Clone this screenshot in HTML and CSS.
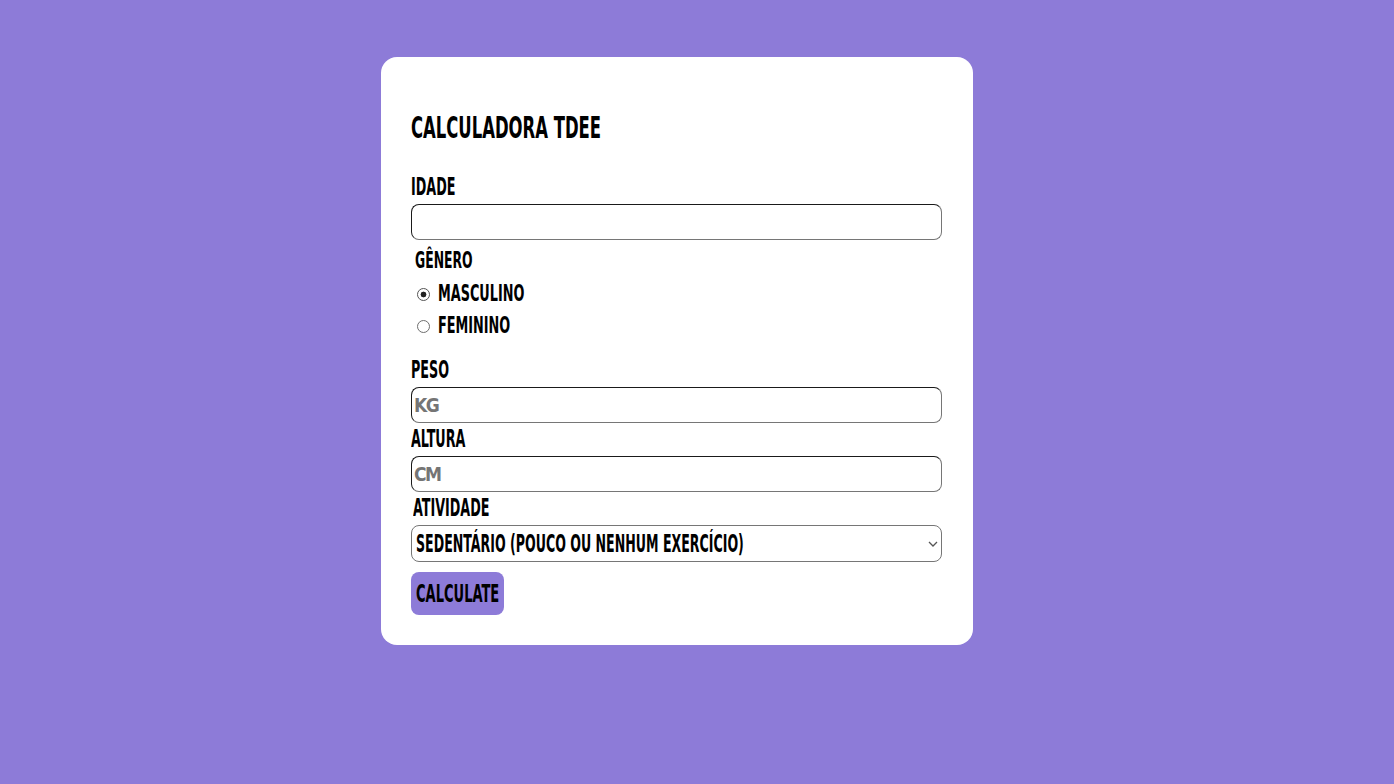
FILE: index.html
```html
<!DOCTYPE html>
<html lang="pt">
<head>
<meta charset="utf-8">
<title>Calculadora TDEE</title>
<link rel="stylesheet" href="styles.css">
</head>
<body>
<div class="page">
  <form class="card">
    <h1 class="title"><span class="t">Calculadora TDEE</span></h1>
    <label class="label" for="idade"><span class="t">Idade</span></label>
    <input class="field" id="idade" type="text">
    <div class="gender">
      <div class="legend"><span class="t">Gênero</span></div>
      <label class="radio-row"><input class="radio" type="radio" name="g" checked><span class="t">Masculino</span></label>
      <label class="radio-row"><input class="radio" type="radio" name="g"><span class="t">Feminino</span></label>
    </div>
    <label class="label label-peso" for="peso"><span class="t">Peso</span></label>
    <input class="field" id="peso" type="text" placeholder="kg">
    <label class="label label-tight" for="altura"><span class="t">Altura</span></label>
    <input class="field" id="altura" type="text" placeholder="cm">
    <label class="label label-tight label-indent" for="atividade"><span class="t">Atividade</span></label>
    <div class="select" id="atividade" role="combobox" aria-expanded="false" tabindex="0">
      <span class="t select-text">Sedentário (pouco ou nenhum exercício)</span>
      <svg class="chevron" width="10" height="6" viewBox="0 0 10 6" aria-hidden="true"><path d="M1 1l4 4 4-4" fill="none" stroke="#555" stroke-width="1.3"/></svg>
    </div>
    <div class="actions"><button class="button" type="button"><span class="t">Calculate</span></button></div>
  </form>
</div>
</body>
</html>
```
FILE: styles.css
```css
html, body {
  margin: 0;
  padding: 0;
}
body {
  background: #8d7bd8;
  font-family: "DejaVu Sans Condensed", "DejaVu Sans", sans-serif;
  font-weight: 700;
  text-transform: uppercase;
  color: #000;
  min-height: 784px;
}
.t {
  display: inline-block;
  white-space: nowrap;
  transform: scaleX(0.59);
  transform-origin: 0 50%;
}
.page {
  display: flex;
  justify-content: center;
  padding: 57px 40px 0 0;
}
.card {
  width: 531px;
  background: #fff;
  border-radius: 16px;
  padding: 30px 31px 30px 30px;
  display: flex;
  flex-direction: column;
}
.title {
  margin: 22px 0 0;
  font-size: 31px;
  line-height: 36px;
  font-weight: 700;
}
.label {
  display: block;
  font-size: 24px;
  line-height: 28px;
  margin: 28px 0 3px;
}
.label-peso { margin-top: 15px; margin-bottom: 3px; }
.label-tight { margin-top: 2px; margin-bottom: 3px; }
.label-indent { margin-left: 2px; margin-top: 2px; margin-bottom: 3px; }
.field {
  box-sizing: border-box;
  width: 531px;
  height: 36px;
  margin: 0;
  padding: 0 2px;
  border: 1px solid;
  border-color: #1a1a1a #767676 #767676 #1a1a1a;
  border-radius: 8px;
  font-family: inherit;
  font-weight: 700;
  font-size: 19px;
  letter-spacing: -1.5px;
  text-transform: uppercase;
  background: #fff;
}
.field::placeholder {
  color: #757575;
}
.gender {
  margin-top: 6px;
  padding-left: 4px;
  display: flex;
  flex-direction: column;
}
.legend {
  font-size: 23px;
  line-height: 28px;
  margin-bottom: 3px;
}
.legend .t { transform: scaleX(0.6); }
.radio-row {
  display: flex;
  align-items: center;
  height: 32px;
  font-size: 23px;
  line-height: 32px;
}
.radio-row .t { transform: scaleX(0.62); }
.radio {
  appearance: none;
  -webkit-appearance: none;
  box-sizing: border-box;
  width: 13px;
  height: 13px;
  margin: 2px 8px 0 2px;
  border: 1px solid #6e6e6e;
  border-radius: 50%;
  background: #fff;
}
.radio:checked {
  border-color: #555;
  background: radial-gradient(circle, #222 0 2.6px, #fff 3.2px);
}
.select {
  box-sizing: border-box;
  width: 531px;
  height: 37px;
  padding: 0 1px 0 4px;
  border: 1px solid #767676;
  border-radius: 8px;
  background: #fff;
  display: flex;
  align-items: center;
  justify-content: space-between;
  font-size: 25px;
  line-height: 33px;
  overflow: hidden;
}
.select-text {
  transform: scaleX(0.56);
  width: 0;
  flex: 1 1 auto;
}
.chevron {
  flex: none;
  margin: 0 2px 0 0;
}
.actions {
  margin-top: 10px;
  display: flex;
}
.button {
  box-sizing: border-box;
  width: 93px;
  height: 43px;
  padding: 0 0 0 5px;
  border: none;
  border-radius: 8px;
  background: #8d7bd8;
  color: #000;
  font-family: inherit;
  font-weight: 700;
  font-size: 25px;
  line-height: 30px;
  text-align: left;
  text-transform: uppercase;
  display: flex;
  align-items: center;
  overflow: visible;
}
.button .t { transform: scaleX(0.58); }
```
